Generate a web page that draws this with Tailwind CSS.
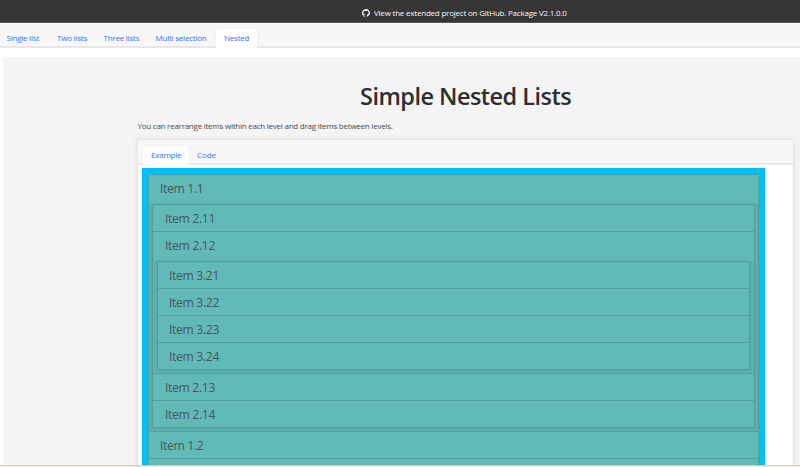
<!DOCTYPE html>
<html lang="en">
<head>
<meta charset="utf-8">
<title>Simple Nested Lists</title>
<script src="https://cdn.jsdelivr.net/npm/@tailwindcss/browser@4"></script>
</head>
<body class="h-[467px] w-[800px] overflow-hidden bg-white font-['Open_Sans','Noto_Sans',sans-serif] text-[8px] leading-[12px] tracking-[-0.22px] text-[#4a4a4a]">
<div class="flex h-[467px] flex-col">
  <header class="flex h-[23px] shrink-0 items-center border-b border-[#555] bg-[#363636] pt-[4px] pl-[362px] text-[#f5f5f5]">
    <svg class="h-[8px] w-[8px]" viewBox="0 0 16 16" fill="currentColor"><path d="M8 0C3.58 0 0 3.58 0 8c0 3.54 2.29 6.53 5.47 7.59.4.07.55-.17.55-.38 0-.19-.01-.82-.01-1.49-2.01.37-2.53-.49-2.69-.94-.09-.23-.48-.94-.82-1.13-.28-.15-.68-.52-.01-.53.63-.01 1.08.58 1.23.82.72 1.21 1.87.87 2.33.66.07-.52.28-.87.51-1.07-1.78-.2-3.64-.89-3.64-3.95 0-.87.31-1.59.82-2.15-.08-.2-.36-1.02.08-2.12 0 0 .67-.21 2.2.82a7.6 7.6 0 0 1 4 0c1.53-1.04 2.2-.82 2.2-.82.44 1.1.16 1.92.08 2.12.51.56.82 1.27.82 2.15 0 3.07-1.87 3.75-3.65 3.95.29.25.54.73.54 1.48 0 1.07-.01 1.93-.01 2.2 0 .21.15.46.55.38A8 8 0 0 0 16 8c0-4.42-3.58-8-8-8z"/></svg>
    <span class="ml-1 whitespace-nowrap tracking-[-0.21px]">View the extended project on GitHub. Package V2.1.0.0</span>
  </header>
  <nav class="mt-px flex h-[24px] shrink-0 border-b-2 border-[#e7e7e7] bg-[#f7f7f7] pt-[5px] whitespace-nowrap text-[#3273f6]">
    <a class="w-[50.5px] pt-[3px] pl-[6.5px]">Single list</a>
    <a class="w-[46.5px] pt-[3px] pl-[6.5px]">Two lists</a>
    <a class="w-[52px] pt-[3px] pl-[6.5px]">Three lists</a>
    <a class="w-[67px] pt-[3px] pl-[6.5px]">Multi selection</a>
    <a class="h-[19px] w-[41px] rounded-t-[2px] bg-white pt-[3px] pl-[8px] shadow-[0_0_1px_#ccc]">Nested</a>
  </nav>
  <main class="mt-[9px] ml-[3px] flex min-h-0 flex-1 flex-col overflow-hidden bg-[#f4f4f4]">
    <h1 class="mt-[22px] ml-[357px] h-[34px] text-[23.5px] leading-[34px] font-semibold tracking-[-0.53px] whitespace-nowrap text-[#2e2e2e]">Simple Nested Lists</h1>
    <p class="mt-[7px] mb-px ml-[134.5px] h-[11px] leading-[11px] tracking-[-0.24px] whitespace-nowrap">You can rearrange items within each level and drag items between levels.</p>
    <section class="mt-[7px] ml-[134px] h-[340px] w-[657px] shrink-0 border border-[#e6e6e6] bg-white shadow-[0_0_5px_rgba(0,0,0,0.08)]">
      <div class="flex h-[25px] border-b-2 border-[#e7e7e7] bg-[#f7f7f7] pt-[6px] pl-[5px] text-[#3273f6]">
        <a class="h-[19px] w-[46px] rounded-t-[2px] bg-white pt-[3px] pl-[8px] shadow-[0_0_1px_#ccc]">Example</a>
        <a class="pt-[3px] pl-[8px] tracking-[-0.1px]">Code</a>
      </div>
      <div class="mt-[3px] ml-[4px] h-[320px] w-[623px] border-[6px] border-[#00bfff] bg-[#60b9b5] text-[12.2px] leading-[28px] tracking-[-0.35px] text-[#46575a]">
        <ul class="w-[611px] rounded-[2px] border-x border-[#529f9a]">
          <li class="h-[257px] border-t border-[#529f9a] bg-[#5cb2ac] px-[3px]">
            <div class="-mx-[3px] h-[29px] bg-[#62bab7] pl-[11px]">Item 1.1</div>
            <ul class="h-[224px] rounded-[2px] border-x border-b border-[#529f9a] bg-[#62bab7] shadow-[0_0_3px_rgba(45,110,105,0.2)]">
              <li class="h-[27px] border-t border-[#529f9a] pl-[12px]">Item 2.11</li>
              <li class="h-[142px] border-t border-[#529f9a] bg-[#5cb2ac] px-[4px]">
                <div class="-mx-[4px] h-[29px] bg-[#62bab7] pl-[12px]">Item 2.12</div>
                <ul class="h-[109px] rounded-[2px] border-x border-b border-[#529f9a] bg-[#62bab7] shadow-[0_0_3px_rgba(45,110,105,0.2)]">
                  <li class="h-[27px] border-t border-[#529f9a] pl-[11px]">Item 3.21</li>
                  <li class="h-[27px] border-t border-[#529f9a] pl-[11px]">Item 3.22</li>
                  <li class="h-[27px] border-t border-[#529f9a] pl-[11px]">Item 3.23</li>
                  <li class="h-[27px] border-t border-[#529f9a] pl-[11px]">Item 3.24</li>
                </ul>
              </li>
              <li class="h-[27px] border-t border-[#529f9a] pl-[12px]">Item 2.13</li>
              <li class="h-[27px] border-t border-[#529f9a] pl-[12px]">Item 2.14</li>
            </ul>
          </li>
          <li class="h-[27px] border-t border-[#529f9a] bg-[#62bab7] pl-[11px]">Item 1.2</li>
          <li class="h-[27px] border-t border-[#529f9a] bg-[#62bab7] pl-[11px]"></li>
        </ul>
      </div>
    </section>
  </main>
  <footer class="h-[2px] shrink-0 border-t border-[#d3d1c4] bg-[#efeddc]"></footer>
</div>
</body>
</html>
